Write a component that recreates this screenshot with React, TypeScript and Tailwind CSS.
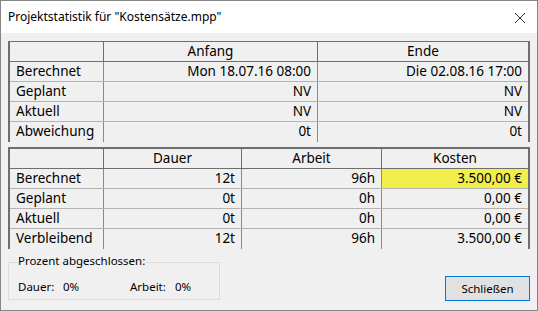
import React from 'react'

const font = { fontFamily: '"Noto Sans", "Open Sans", sans-serif' }

type RowProps = {
  cells: string[]
  widths: string[]
  header?: boolean
  highlight?: number
  last?: boolean
}

const Row = ({ cells, widths, header, highlight, last }: RowProps) => (
  <div
    className={
      'flex h-[20px] ' +
      (header ? 'border-b border-[#6e6e6e]' : last ? '' : 'border-b border-[#b4b4b4]')
    }
  >
    {cells.map((c, i) => (
      <div
        key={i}
        className={
          widths[i] +
          ' flex items-center leading-none ' +
          (i < cells.length - 1 ? (header ? 'border-r border-[#6e6e6e] ' : 'border-r border-[#8a8a8a] ') : '') +
          (i === 0 ? 'justify-start pl-[6px] ' : header ? 'justify-center ' : 'justify-end pr-[6px] ') +
          (highlight === i ? 'bg-[#f2ef4c]' : '')
        }
      >
        {c}
      </div>
    ))}
  </div>
)

const w1 = ['w-[94px]', 'w-[214px]', 'w-[210px]']
const w2 = ['w-[94px]', 'w-[138px]', 'w-[140px]', 'w-[146px]']

export default function App() {
  return (
    <div
      style={font}
      className="w-[538px] h-[311px] border border-[#868686] bg-[#f0f0f0] flex flex-col text-[13.5px] text-black overflow-hidden"
    >
      {/* title bar */}
      <div className="h-[32px] bg-white flex items-center justify-between pl-[7px] pr-[11px]">
        <span className="text-[12px]">Projektstatistik für "Kostensätze.mpp"</span>
        <svg width="12" height="12" viewBox="0 0 12 12" className="mt-[1px]">
          <path d="M1 1 L11 11 M11 1 L1 11" stroke="#333" strokeWidth="1" fill="none" />
        </svg>
      </div>

      <div className="px-[7px] pt-[8px] flex flex-col">
        {/* Anfang / Ende */}
        <div className="w-[522px] border-t border-l-2 border-r-2 border-[#6e6e6e]">
          <Row header widths={w1} cells={['', 'Anfang', 'Ende']} />
          <Row widths={w1} cells={['Berechnet', 'Mon 18.07.16 08:00', 'Die 02.08.16 17:00']} />
          <Row widths={w1} cells={['Geplant', 'NV', 'NV']} />
          <Row widths={w1} cells={['Aktuell', 'NV', 'NV']} />
          <Row widths={w1} cells={['Abweichung', '0t', '0t']} last />
        </div>

        {/* Dauer / Arbeit / Kosten */}
        <div className="mt-[5px] w-[522px] border-t-2 border-l-2 border-r-2 border-[#6e6e6e]">
          <Row header widths={w2} cells={['', 'Dauer', 'Arbeit', 'Kosten']} />
          <Row widths={w2} cells={['Berechnet', '12t', '96h', '3.500,00 €']} highlight={3} />
          <Row widths={w2} cells={['Geplant', '0t', '0h', '0,00 €']} />
          <Row widths={w2} cells={['Aktuell', '0t', '0h', '0,00 €']} />
          <Row widths={w2} cells={['Verbleibend', '12t', '96h', '3.500,00 €']} last />
        </div>

        <div className="flex justify-between items-start mt-[13px]">
          <div className="relative w-[212px] h-[38px] border border-[#dcdcdc] text-[11.5px]">
            <span className="absolute left-[9px] -top-[8px] bg-[#f0f0f0] pr-[1px] leading-none">
              Prozent abgeschlossen:
            </span>
            <div className="flex items-center h-full pl-[9px] pt-[11px]">
              <span className="w-[45px]">Dauer:</span>
              <span className="w-[67px]">0%</span>
              <span className="w-[45px]">Arbeit:</span>
              <span>0%</span>
            </div>
          </div>
          <button className="mt-[14px] w-[85px] h-[25px] border border-[#0078d7] bg-[#e1e1e1] text-[11.5px] flex items-center justify-center">
            Schließen
          </button>
        </div>
      </div>
    </div>
  )
}
